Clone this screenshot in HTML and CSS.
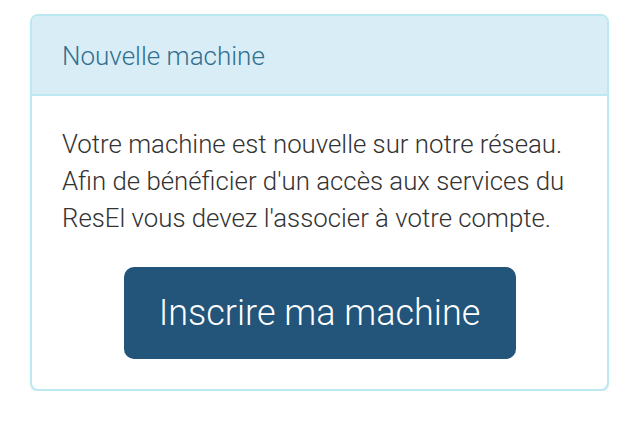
FILE: index.html
```html
<!DOCTYPE html>
<html lang="fr">
<head>
<meta charset="utf-8">
<title>Nouvelle machine</title>
<link rel="stylesheet" href="styles.css">
</head>
<body>
<div class="panel">
  <div class="panel-heading">
    <h3 class="panel-title">Nouvelle machine</h3>
  </div>
  <div class="panel-body">
    <p class="message">Votre machine est nouvelle sur notre réseau. Afin de bénéficier d'un accès aux services du ResEl vous devez l'associer à votre compte.</p>
    <div class="actions">
      <a class="btn" href="#">Inscrire ma machine</a>
    </div>
  </div>
</div>
</body>
</html>
```
FILE: styles.css
```css
html, body {
  margin: 0;
  padding: 0;
  background: #ffffff;
}
body {
  font-family: Roboto, "Noto Sans", sans-serif;
  font-weight: 300;
  color: #333333;
  padding: 14px 31px 0 30px;
}
.panel {
  border: 2px solid #bce8f1;
  border-radius: 8px;
  background: #ffffff;
  box-shadow: 0 2px 2px rgba(0, 0, 0, 0.05);
  overflow: hidden;
}
.panel-heading {
  background: #d9edf7;
  border-bottom: 2px solid #bce8f1;
  padding: 21px 30px 19px;
}
.panel-title {
  margin: 0;
  font-size: 26px;
  font-weight: 300;
  line-height: 38px;
  color: #31708f;
}
.panel-body {
  padding: 30px;
}
.message {
  margin: 0;
  font-size: 25.8px;
  line-height: 37px;
}
.actions {
  display: flex;
  justify-content: center;
  margin-top: 30px;
}
.btn {
  display: block;
  width: 392px;
  height: 92px;
  box-sizing: border-box;
  background: #23547a;
  border-radius: 10px;
  color: #ffffff;
  text-decoration: none;
  font-size: 36px;
  font-weight: 300;
  line-height: 93px;
  text-align: center;
}
```
